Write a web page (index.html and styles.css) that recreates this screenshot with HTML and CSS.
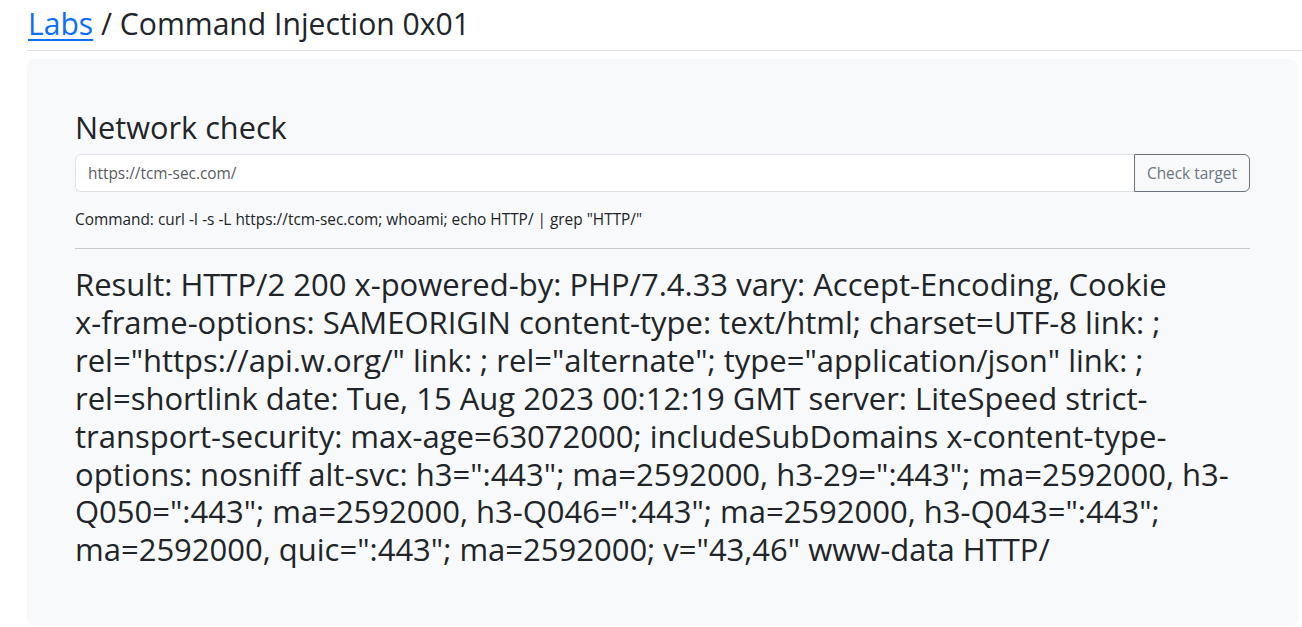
FILE: index.html
```html
<!DOCTYPE html>
<html lang="en">
<head>
<meta charset="utf-8">
<title>Command Injection 0x01</title>
<link rel="stylesheet" href="styles.css">
</head>
<body>
<div class="page">
  <header class="page-header">
    <h2 class="title"><a class="title-link" href="#">Labs</a> / Command Injection 0x01</h2>
  </header>
  <main class="panel">
    <h3 class="panel-title">Network check</h3>
    <form class="input-group">
      <input class="field" type="text" value="https://tcm-sec.com/">
      <button class="btn" type="button">Check target</button>
    </form>
    <p class="command">Command: curl -I -s -L https://tcm-sec.com; whoami; echo HTTP/ | grep "HTTP/"</p>
    <hr class="divider">
    <p class="result">Result: HTTP/2 200 x-powered-by: PHP/7.4.33 vary: Accept-Encoding, Cookie <span class="nowrap">x-frame-options:</span> SAMEORIGIN content-type: text/html; charset=UTF-8 link: ; rel="https://api.w.org/" link: ; rel="alternate"; type="application/json" link: ; rel=shortlink date: Tue, 15 Aug 2023 00:12:19 GMT server: LiteSpeed strict-transport-security: max-age=63072000; includeSubDomains x-content-type-options: nosniff alt-svc: h3=":443"; ma=2592000, h3-29=":443"; ma=2592000, h3-Q050=":443"; ma=2592000, h3-Q046=":443"; ma=2592000, h3-Q043=":443"; ma=2592000, quic=":443"; ma=2592000; v="43,46" www-data HTTP/</p>
  </main>
</div>
</body>
</html>
```

FILE: styles.css
```css
* { box-sizing: border-box; }

html, body {
  margin: 0;
  padding: 0;
  background: #ffffff;
}

body {
  font-family: "Open Sans", "Noto Sans", sans-serif;
  color: #212529;
}

.page {
  padding: 5px 4px 0 27px;
}

.page-header {
  margin-right: -4px;
  padding: 0 0 8px 1px;
  border-bottom: 1px solid #dee2e6;
}

.title {
  margin: 0;
  font-size: 30.1px;
  font-weight: 400;
  line-height: 37px;
}

.title-link {
  color: #0d6efd;
  text-decoration: underline;
  text-decoration-thickness: 2px;
  text-underline-offset: 4px;
}

.panel {
  margin-top: 8px;
  background: #f8f9fa;
  border-radius: 8px;
  padding: 50px 48px 57px 48px;
}

.panel-title {
  margin: 0 0 8px;
  font-size: 30.7px;
  font-weight: 400;
  line-height: 37px;
}

.input-group {
  display: flex;
  height: 38px;
}

.field {
  flex: 1;
  min-width: 0;
  height: 38px;
  padding: 0 12px;
  font-family: inherit;
  font-size: 15.4px;
  color: #595c5f;
  background: #ffffff;
  border: 1px solid #dee2e6;
  border-right: 0;
  border-radius: 6px 0 0 6px;
  outline: none;
}

.btn {
  height: 38px;
  padding: 0 12px;
  font-family: inherit;
  font-size: 15.4px;
  color: #6c757d;
  background: transparent;
  border: 1px solid #6c757d;
  border-radius: 0 6px 6px 0;
}

.command {
  margin: 16px 0 0;
  font-size: 15.4px;
  line-height: 24px;
}

.divider {
  margin: 16px 0 0;
  border: 0;
  border-top: 1px solid #c6c8ca;
}

.result {
  margin: 17px 0 0;
  font-size: 31px;
  line-height: 37.9px;
}

.nowrap {
  white-space: nowrap;
}
```
